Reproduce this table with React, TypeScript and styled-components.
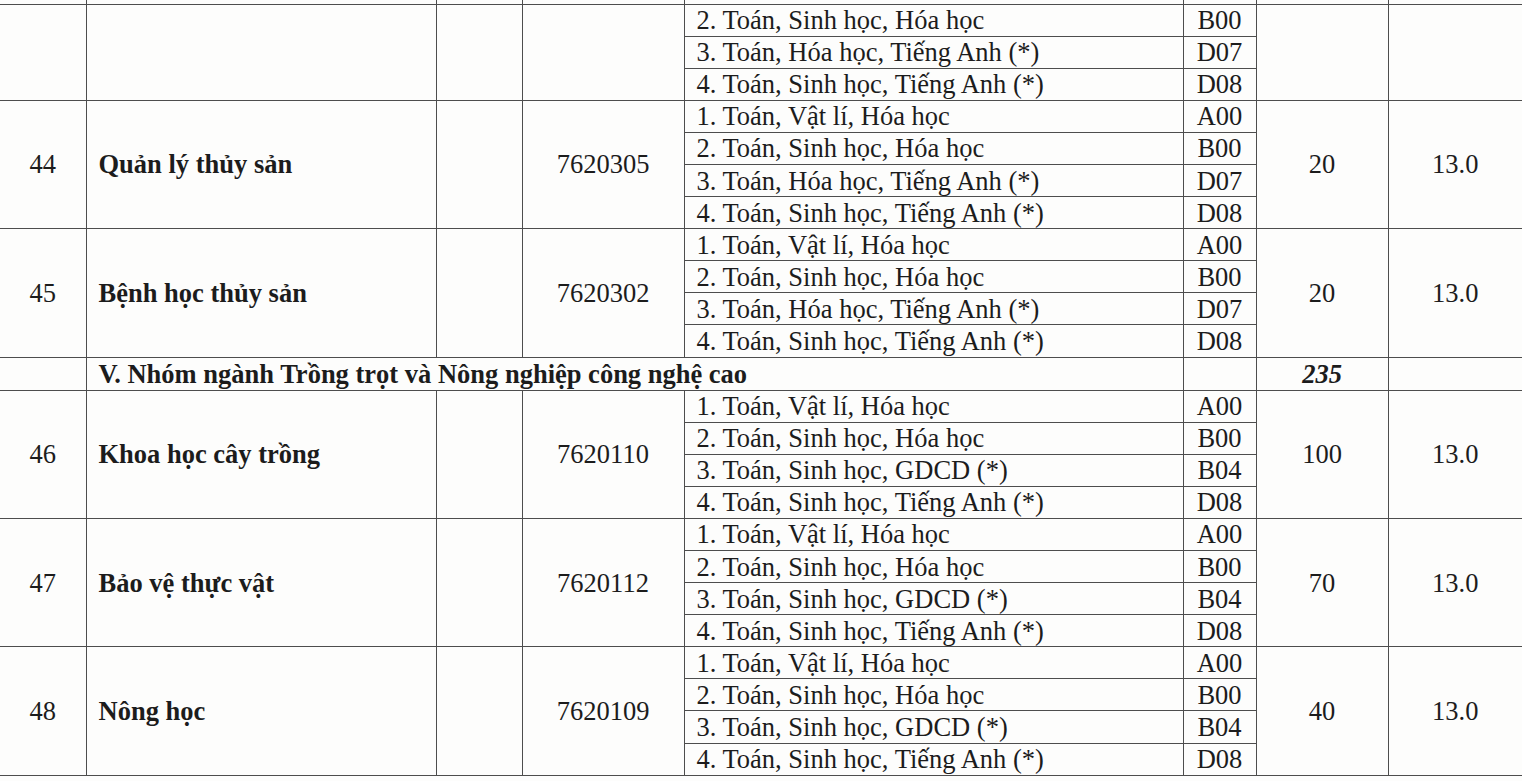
import React from 'react';
import styled, { createGlobalStyle } from 'styled-components';

type Combo = [string, string];

interface Program {
    no: string;
    name: string;
    code: string;
    combos: Combo[];
    quota: string;
    score: string;
}

const fullCombosA: Combo[] = [
    ['1. Toán, Vật lí, Hóa học', 'A00'],
    ['2. Toán, Sinh học, Hóa học', 'B00'],
    ['3. Toán, Hóa học, Tiếng Anh (*)', 'D07'],
    ['4. Toán, Sinh học, Tiếng Anh (*)', 'D08'],
];

const fullCombosB: Combo[] = [
    ['1. Toán, Vật lí, Hóa học', 'A00'],
    ['2. Toán, Sinh học, Hóa học', 'B00'],
    ['3. Toán, Sinh học, GDCD (*)', 'B04'],
    ['4. Toán, Sinh học, Tiếng Anh (*)', 'D08'],
];

// continued from the previous page
const carried: Program = {
    no: '',
    name: '',
    code: '',
    combos: fullCombosA.slice(1),
    quota: '',
    score: '',
};

const groupIV: Program[] = [
    { no: '44', name: 'Quản lý thủy sản', code: '7620305', combos: fullCombosA, quota: '20', score: '13.0' },
    { no: '45', name: 'Bệnh học thủy sản', code: '7620302', combos: fullCombosA, quota: '20', score: '13.0' },
];

const groupV: Program[] = [
    { no: '46', name: 'Khoa học cây trồng', code: '7620110', combos: fullCombosB, quota: '100', score: '13.0' },
    { no: '47', name: 'Bảo vệ thực vật', code: '7620112', combos: fullCombosB, quota: '70', score: '13.0' },
    { no: '48', name: 'Nông học', code: '7620109', combos: fullCombosB, quota: '40', score: '13.0' },
];

const ProgramRows = ({ p }: { p: Program }) => {
    const span = p.combos.length;
    return (
        <>
            {p.combos.map(([subjects, combo], i) => (
                <Row key={combo + i}>
                    {i === 0 && (
                        <>
                            <Cell rowSpan={span} $align="center">{p.no}</Cell>
                            <Cell rowSpan={span} $bold>{p.name}</Cell>
                            <Cell rowSpan={span} />
                            <Cell rowSpan={span} $align="center">{p.code}</Cell>
                        </>
                    )}
                    <Cell>{subjects}</Cell>
                    <Cell $align="center">{combo}</Cell>
                    {i === 0 && (
                        <>
                            <Cell rowSpan={span} $align="center">{p.quota}</Cell>
                            <Cell rowSpan={span} $align="center">{p.score}</Cell>
                        </>
                    )}
                </Row>
            ))}
        </>
    );
};

export default function App() {
    return (
        <>
            <GlobalStyle />
            <Sheet>
                <Table>
                    <colgroup>
                        <col style={{ width: 86 }} />
                        <col style={{ width: 350 }} />
                        <col style={{ width: 86 }} />
                        <col style={{ width: 162 }} />
                        <col style={{ width: 499 }} />
                        <col style={{ width: 73 }} />
                        <col style={{ width: 132 }} />
                        <col style={{ width: 134 }} />
                    </colgroup>
                    <tbody>
                        <SliverRow>
                            {Array.from({ length: 8 }).map((_, i) => (
                                <SliverCell key={i} />
                            ))}
                        </SliverRow>

                        <ProgramRows p={carried} />
                        {groupIV.map(p => <ProgramRows key={p.no} p={p} />)}

                        {/* Section header */}
                        <Row $tall>
                            <Cell />
                            <Cell colSpan={4} $bold>V. Nhóm ngành Trồng trọt và Nông nghiệp công nghệ cao</Cell>
                            <Cell />
                            <Cell $align="center" $bold $italic>235</Cell>
                            <Cell />
                        </Row>

                        {groupV.map(p => <ProgramRows key={p.no} p={p} />)}
                    </tbody>
                </Table>
            </Sheet>
        </>
    );
}

const GlobalStyle = createGlobalStyle`
    html, body {
        margin: 0;
        padding: 0;
        background: #fdfdfc;
    }
`;

const Sheet = styled.div`
    width: 1522px;
    height: 781px;
    overflow: hidden;
    background: #fdfdfc;
`;

const Table = styled.table`
    width: 1522px;
    table-layout: fixed;
    border-collapse: collapse;
    font-family: "Liberation Serif", "Times New Roman", serif;
    font-size: 26.5px;
    color: #1c1c1c;

    td {
        border: 1.5px solid #4d4d4d;
    }

    td:first-child {
        border-left: none;
    }

    td:last-child {
        border-right: none;
    }
`;

const SliverRow = styled.tr`
    height: 4px;
`;

const SliverCell = styled.td`
    padding: 0;
    height: 3px;
    font-size: 0;
    line-height: 0;
    && {
        border-top: none;
    }
`;

const Row = styled.tr<{ $tall?: boolean }>`
    height: ${p => (p.$tall ? '33px' : '32.1px')};
`;

const Cell = styled.td<{ $align?: 'left' | 'center'; $bold?: boolean; $italic?: boolean }>`
    padding: 0 12px;
    line-height: 30px;
    white-space: nowrap;
    overflow: hidden;
    vertical-align: middle;
    text-align: ${p => p.$align ?? 'left'};
    font-weight: ${p => (p.$bold ? 700 : 400)};
    font-style: ${p => (p.$italic ? 'italic' : 'normal')};
`;
